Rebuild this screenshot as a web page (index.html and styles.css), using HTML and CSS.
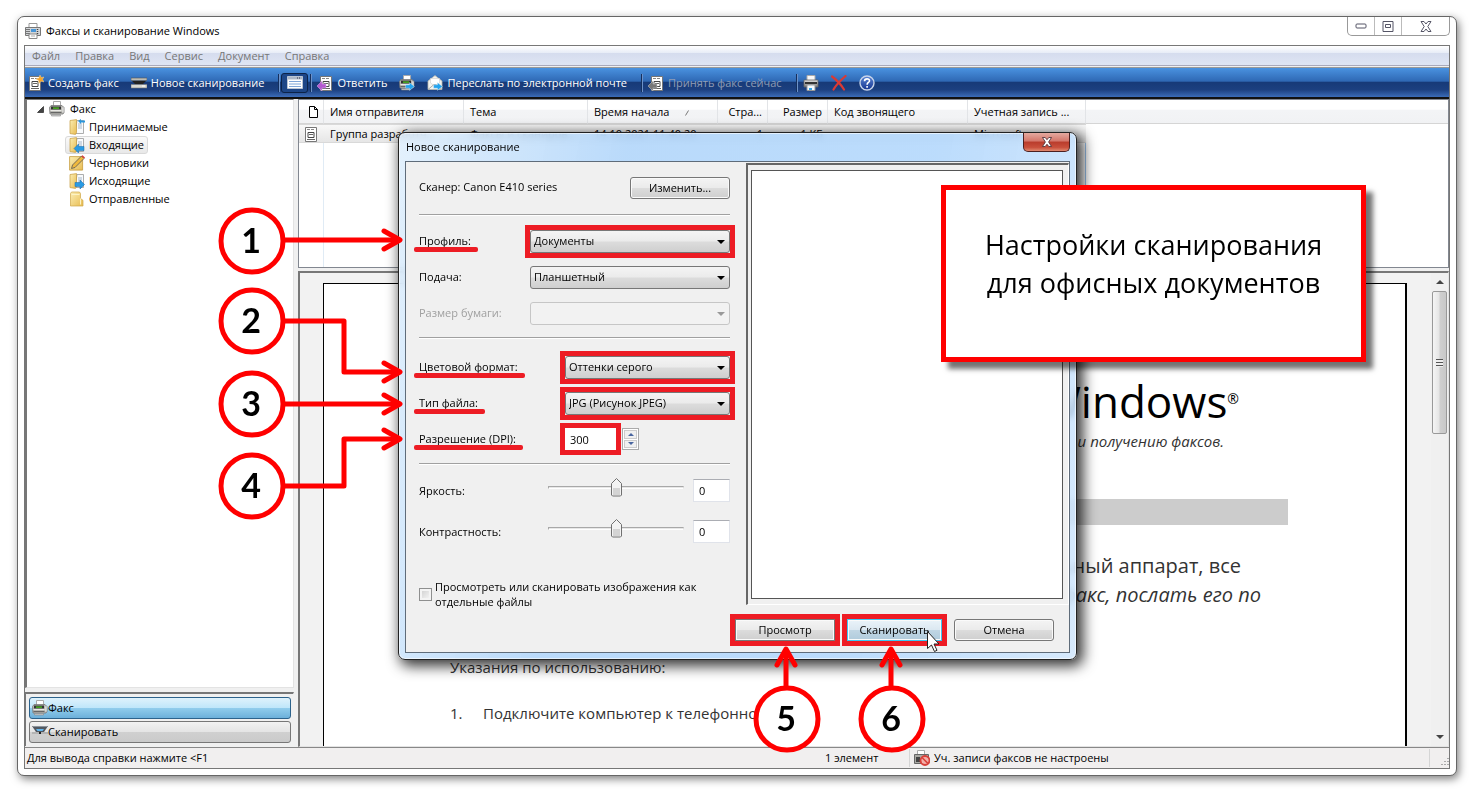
FILE: index.html
```html
<!DOCTYPE html>
<html lang="ru">
<head>
<meta charset="utf-8">
<title>Факсы и сканирование Windows</title>
<link rel="stylesheet" href="styles.css">
</head>
<body>
<svg class="defs" aria-hidden="true">
  <defs>
    <linearGradient id="gFold" x1="0" y1="0" x2="1" y2="1"><stop offset="0" stop-color="#fbeeb4"/><stop offset="1" stop-color="#e8bc52"/></linearGradient>
    <linearGradient id="gGray" x1="0" y1="0" x2="0" y2="1"><stop offset="0" stop-color="#e4e4e4"/><stop offset="1" stop-color="#777"/></linearGradient>
    <linearGradient id="gHelp" x1="0" y1="0" x2="0" y2="1"><stop offset="0" stop-color="#5b86d6"/><stop offset="1" stop-color="#16348f"/></linearGradient>
    <symbol id="fax" viewBox="0 0 16 16">
      <path d="M4.500 .5h7v5h-7z" fill="#fff" stroke="#aaa"/>
      <path d="M2 4.500h11l2 2v5l-1 1.500H1L.5 6.500z" fill="#b9b9b4" stroke="#777" stroke-width=".8"/>
      <path d="M2 5.500h10v3H2z" fill="#333"/><path d="M4 6.500h6v1.200H4z" fill="#4fd01a"/>
      <path d="M1.500 9.500h11" stroke="#e8e8e4"/><path d="M1.500 11.500h11" stroke="#666"/><path d="M2.500 13.500h9v1.500h-9z" fill="#ccc" stroke="#888" stroke-width=".6"/><path d="M14 6.500v5" stroke="#f4f4f4"/>
    </symbol>
    <symbol id="printer" viewBox="0 0 16 16">
      <path d="M4 .5h8V6H4z" fill="#f8f8f8" stroke="#aaa"/>
      <path d="M1 5h14v7H1z" fill="url(#gGray)" stroke="#666" stroke-width=".8"/>
      <path d="M2 7h12v2H2z" fill="#333"/><path d="M4 10h8v5.500H4z" fill="#f5faff" stroke="#999"/><path d="M6 13h3v2H6z" fill="#35a5e8"/>
    </symbol>
    <symbol id="appfax" viewBox="0 0 16 16">
      <path d="M4 .5h8V5H4z" fill="#fff" stroke="#999"/>
      <path d="M.5 4.500h15v8H.5z" fill="#d2d5d8" stroke="#777"/>
      <path d="M2 6v5M4 6v5" stroke="#444" stroke-dasharray="1 1" stroke-width="1.300"/>
      <path d="M6 6h5v3H6z" fill="#4796d8"/><path d="M12.500 6v5" stroke="#444" stroke-width="1.500" stroke-dasharray="1 1"/>
      <path d="M4 11h8v4.500H4z" fill="#fff" stroke="#888"/><path d="M6 13h4" stroke="#aaa"/>
    </symbol>
    <symbol id="doc" viewBox="0 0 16 16">
      <path d="M2.500 1.500h11v14h-11z" fill="#fff" stroke="#777"/>
      <path d="M4 3.500h8" stroke="#888" stroke-dasharray="3 1"/>
      <path d="M5 6.500h6v5H5z" fill="#fff" stroke="#444"/><path d="M6 8.500h4M4 13.500h8" stroke="#666"/>
    </symbol>
    <symbol id="newfax" viewBox="0 0 16 16">
      <use href="#doc" x="-1"/><path d="m12 0 1.200 2.500L16 2l-1.500 2.200L16 7l-3-.8L11 8.500l-.4-3L8 4l2.800-1z" fill="#f6a42a" stroke="#ffe0a0" stroke-width=".4"/>
    </symbol>
    <symbol id="arrow" viewBox="0 0 9 8"><path d="M.5 2.500H4V.5L8.500 4 4 7.500v-2H.5z" fill="currentColor" stroke="#fff" stroke-opacity=".5" stroke-width=".6"/></symbol>
    <symbol id="scan" viewBox="0 0 16 16">
      <path d="M0 3h16v2.500H0z" fill="#bdbdb5" stroke="#555" stroke-width=".6"/><path d="M1 6h14l-3 3H4z" fill="#222"/>
      <path d="M0 9.500h16V13H0z" fill="#d9d9d2" stroke="#777" stroke-width=".6"/><path d="M11 11h3" stroke="#fff"/>
    </symbol>
    <symbol id="scan2" viewBox="0 0 16 16">
      <path d="M0 2h16l-4 6H4z" fill="#525860"/><path d="M1 2.500h14" stroke="#8d959c"/><path d="M4 5h8l-1.500 2h-5z" fill="#63b8f0"/><path d="M0 9h16" stroke="#999"/><path d="M7 8h2v2H7z" fill="#222"/>
    </symbol>
    <symbol id="pane" viewBox="0 0 16 13"><path d="M.5.5h15v12H.5z" fill="#fff" stroke="#b8c4d4"/><path d="M1 1h14v2.500H1z" fill="#aab6c6"/><path d="M10 2h4" stroke="#334" stroke-dasharray="1 1"/><path d="M2 5.500h12M2 8h12M2 10.500h12" stroke="#7fa6d8"/></symbol>
    <symbol id="folder" viewBox="0 0 16 16"><path d="M1.500 2.500l1-1.500h8l1 1.500v5l2.500 1.800v5.700H1.500z" fill="url(#gFold)" stroke="#cfa647" stroke-width=".7"/><path d="M11.500 7.500v6M2.500 3.500h8" stroke="#fdf3c6" fill="none"/></symbol>
    <symbol id="folderdoc" viewBox="0 0 16 16"><path d="M8 1.500h6.500v13H6z" fill="#f8fafc" stroke="#999" stroke-width=".8"/><path d="M9 5h4M9 7h4M9 9h4" stroke="#a5b7cc"/><path d="M1 1.500 7.500.6v13l-1 1.800-5.500-.8z" fill="url(#gFold)" stroke="#c59b3c" stroke-width=".7"/></symbol>
  </defs>
</svg>

<main class="window">
  <header class="titlebar">
    <svg class="ico"><use href="#appfax"/></svg>
    <h1>Факсы и сканирование Windows</h1>
    <div class="winbtns">
      <button aria-label="Свернуть"><svg width="12" height="6"><rect x="1" y="1" width="10" height="4" rx="1" fill="#fff" stroke="#556"/></svg></button>
      <button aria-label="Развернуть"><svg width="12" height="11"><path d="M1 .5h10v10H1z" fill="#fff" stroke="#556"/><path d="M3.500 3.500h5v3h-5z" fill="none" stroke="#556"/></svg></button>
      <button aria-label="Закрыть" class="wide"><svg width="12" height="11" viewBox="0 0 12 11"><path d="M1 .5h3l2 2.500 2-2.500h3L7.800 5.500l3.200 5H8L6 8l-2 2.500H1l3.200-5z" fill="#fff" stroke="#556"/></svg></button>
    </div>
  </header>

  <div class="client">
    <nav class="menu">
      <a href="#">Файл</a><a href="#">Правка</a><a href="#">Вид</a><a href="#">Сервис</a><a href="#">Документ</a><a href="#">Справка</a>
    </nav>
    <div class="toolbar">
      <button><svg class="ico"><use href="#newfax"/></svg>Создать факс</button>
      <button><svg class="ico"><use href="#scan"/></svg>Новое сканирование</button>
      <i class="sep"></i>
      <button class="pressed" aria-label="Область просмотра"><svg width="16" height="13"><use href="#pane"/></svg></button>
      <i class="sep tight"></i>
      <button class="reply"><svg class="ico" viewBox="0 0 16 16"><use href="#doc" x="1"/><path d="M0 11l5-5v3h4v4H5v3z" fill="#b45bd0" stroke="#e0b0f0" stroke-width=".5"/></svg>Ответить</button>
      <button aria-label="Переслать факс"><svg class="ico" viewBox="0 0 16 16"><use href="#fax"/><use href="#arrow" x="6" y="7" width="10" height="9" color="#23a3ee"/></svg></button>
      <button><svg class="ico" viewBox="0 0 16 16"><path d="M1 6l7-5.500L15 6v8.500H1z" fill="#f5f5f0" stroke="#b9b9b0" stroke-width=".8"/><path d="M3.500 3.500h9V8L8 11 3.500 8z" fill="#fff" stroke="#ccc" stroke-width=".6"/><path d="M1 14.500l6-5h2l6 5" fill="none" stroke="#aaa"/><use href="#arrow" x="6" y="7" width="10" height="9" color="#23a3ee"/></svg>Переслать по электронной почте</button>
      <i class="sep"></i>
      <button class="receive" disabled><svg class="ico" viewBox="0 0 16 16"><use href="#doc" x="1"/><path d="M0 11l5-5v3h4v4H5v3z" fill="#777" stroke="#ccc" stroke-width=".5"/></svg>Принять факс сейчас</button>
      <i class="sep"></i>
      <button aria-label="Печать" class="print"><svg class="ico"><use href="#printer"/></svg></button>
      <button aria-label="Удалить"><svg class="ico" viewBox="0 0 16 16"><path d="M1 1.500c4 3 9 8 12 13M14.500 1C10 5 5 10 2.500 14.500" fill="none" stroke="#d93a35" stroke-width="2.200" stroke-linecap="round"/></svg></button>
      <button aria-label="Справка"><svg class="ico" viewBox="0 0 16 16"><circle cx="8" cy="8" r="7" fill="url(#gHelp)" stroke="#c8d4ea" stroke-width="1.400"/><path d="M5.500 6.200C5.500 3 10.800 3.200 10.500 6c-.2 1.500-2.400 1.600-2.400 3.700M8.100 11v1.700" fill="none" stroke="#fff" stroke-width="1.600"/></svg></button>
    </div>

    <div class="workspace">
      <aside class="side">
        <div class="tree">
          <div class="root"><svg width="7" height="7"><path d="M6.500.5v6h-6z" fill="#444" stroke="#111" stroke-width=".6"/></svg><svg class="ico"><use href="#fax"/></svg><span>Факс</span></div>
          <ul>
            <li><svg class="ico" viewBox="0 0 16 16"><use href="#folderdoc"/><path d="M9 2l3-2v1.500h4v2h-4V5z" fill="#2a96dc"/></svg><span>Принимаемые</span></li>
            <li class="on"><svg class="ico" viewBox="0 0 16 16"><use href="#folderdoc"/><path d="M5 11.500L9.500 7v2.500h5.500v4H9.500V16z" fill="#2a9be4" stroke="#1668a8" stroke-width=".5"/></svg><span>Входящие</span></li>
            <li><svg class="ico" viewBox="0 0 16 16"><path d="M.6 1.600h13v13.500H.6z" fill="url(#gFold)" stroke="#c59b3c" stroke-width=".8"/><path d="M2.500 13.500l1-3.500 9-9 2.500 2.500-9 9z" fill="#f0b93c" stroke="#555" stroke-width=".8"/><path d="M12.500 1L15 3.500l1-1L13.500.2z" fill="#d33"/></svg><span>Черновики</span></li>
            <li><svg class="ico" viewBox="0 0 16 16"><use href="#folderdoc"/><path d="M15.500 11.500L11 7v2.500H6v4h5V16z" fill="#2a9be4" stroke="#1668a8" stroke-width=".5"/></svg><span>Исходящие</span></li>
            <li><svg class="ico"><use href="#folder"/></svg><span>Отправленные</span></li>
          </ul>
        </div>
        <div class="modes">
          <button class="active"><svg class="ico"><use href="#fax"/></svg>Факс</button>
          <button><svg class="ico"><use href="#scan2"/></svg>Сканировать</button>
        </div>
      </aside>

      <section class="content">
        <div class="list">
          <table>
            <colgroup><col class="c-icon"><col class="c-wide"><col class="c-subj"><col class="c-time"><col class="c-pages"><col class="c-size"><col class="c-wide"><col class="c-acc"><col></colgroup>
            <thead><tr>
              <th><svg width="9" height="12"><path d="M.5.5h5l3 3v8h-8zM5.500.5v3h3" fill="#fff" stroke="#000"/></svg></th>
              <th>Имя отправителя</th><th>Тема</th>
              <th>Время начала<svg class="sort" width="7" height="6"><path d="M.5 5.500L3.500.5" stroke="#777" fill="none"/></svg></th>
              <th class="num">Стра...</th><th class="num">Размер</th><th>Код звонящего</th><th>Учетная запись ...</th><th></th>
            </tr></thead>
            <tbody><tr>
              <td><svg class="ico"><use href="#doc"/></svg></td><td>Группа разработч...</td><td>Факсы и сканиров...</td><td>14.10.2021 11:40:20</td><td class="num">1</td><td class="num">1 КБ</td><td></td><td>Microsoft</td><td></td>
            </tr></tbody>
          </table>
          <div class="gridlines"></div>
        </div>

        <div class="preview">
          <article class="page">
            <h2>Windows<sup>®</sup></h2>
            <p class="sub">и получению факсов.</p>
            <div class="bar"></div>
            <p class="lead">факсимильный аппарат, все</p>
            <p class="lead it">факс, послать его по</p>
            <p class="hint">Указания по использованию:</p>
            <ol><li><span>1.</span>Подключите компьютер к телефонной</li></ol>
          </article>
          <div class="scroll">
            <i class="up"></i>
            <div class="thumb"><i></i></div>
            <i class="down"></i>
          </div>
        </div>
      </section>
    </div>

    <footer class="status">
      <span class="help">Для вывода справки нажмите &lt;F1</span>
      <span class="count">1 элемент</span>
      <span class="acct"><svg class="ico" viewBox="0 0 16 16"><path d="M3.500.5h7V5h-7z" fill="#fff" stroke="#aaa"/><path d="M.5 4.500h14v9H.5z" fill="#a9a9a4" stroke="#666"/><path d="M2 7h4v5H2z" fill="#444"/><circle cx="11" cy="10.500" r="4.500" fill="#f3b0aa" stroke="#d8403a" stroke-width="1.800"/><path d="M8 7.500l6 6" stroke="#d8403a" stroke-width="1.600"/></svg>Уч. записи факсов не настроены</span>
      <span class="grip"><svg width="10" height="10"><path d="M9 1v1M6 4v1M9 4v1M3 7v1M6 7v1M9 7v1" stroke="#aaa" stroke-width="2"/></svg></span>
    </footer>
  </div>
</main>

<section class="dialog" role="dialog" aria-labelledby="dlg">
  <header><h2 id="dlg">Новое сканирование</h2>
    <button class="close" aria-label="Закрыть"><svg width="12" height="10" viewBox="0 0 12 11"><path d="M1 .5h3l2 2.500 2-2.500h3L7.800 5.500l3.200 5H8L6 8l-2 2.500H1l3.200-5z" fill="#fff" stroke="#54343a"/></svg></button>
  </header>
  <form class="panel">
    <div class="options">
      <div class="row scanner"><span>Сканер: Canon E410 series</span><button type="button" class="btn">Изменить...</button></div>
      <hr>
      <div class="row"><label for="prof" class="ul">Профиль:</label><div class="sel w200 mark"><select id="prof"><option>Документы</option></select></div></div>
      <div class="row"><label for="feed">Подача:</label><div class="sel w200"><select id="feed"><option>Планшетный</option></select></div></div>
      <div class="row off"><label for="size">Размер бумаги:</label><div class="sel w200"><select id="size" disabled><option></option></select></div></div>
      <hr>
      <div class="row"><label for="color" class="ul">Цветовой формат:</label><div class="sel w165 mark"><select id="color"><option>Оттенки серого</option></select></div></div>
      <div class="row"><label for="type" class="ul">Тип файла:</label><div class="sel w165 mark"><select id="type"><option>JPG (Рисунок JPEG)</option></select></div></div>
      <div class="row"><label for="dpi" class="ul">Разрешение (DPI):</label>
        <div class="spin"><input id="dpi" class="mark" type="text" value="300"><span class="ud"><button type="button" aria-label="Больше"></button><button type="button" aria-label="Меньше"></button></span></div></div>
      <hr>
      <div class="row tall"><label for="br">Яркость:</label><input id="br" type="range" min="-100" max="100" value="0"><input class="val" type="text" value="0" aria-label="Значение яркости"></div>
      <div class="row tall"><label for="ct">Контрастность:</label><input id="ct" type="range" min="-100" max="100" value="0"><input class="val" type="text" value="0" aria-label="Значение контрастности"></div>
      <div class="check"><input type="checkbox" id="sep"><label for="sep">Просмотреть или сканировать изображения как отдельные файлы</label></div>
    </div>
    <div class="canvas"><div></div></div>
    <div class="actions">
      <button type="button" class="btn mark">Просмотр</button>
      <button type="button" class="btn hot mark">Сканировать</button>
      <button type="button" class="btn">Отмена</button>
    </div>
  </form>
</section>

<aside class="callout">Настройки сканирования<br>для офисных документов</aside>

<svg class="notes" width="940" height="770">
  <g fill="none" stroke="#f00" stroke-width="5" stroke-linejoin="round">
    <path d="M284 240H399"/><path d="M284 321H344V372H399"/><path d="M284 404H399"/><path d="M284 486H344V439H399"/>
    <path d="M786 686V650"/><path d="M891 686V650"/>
    <g stroke-linecap="round">
      <path d="M384 231l16 9-16 9"/><path d="M384 363l16 9-16 9"/><path d="M384 395l16 9-16 9"/><path d="M384 430l16 9-16 9"/>
      <path d="M777 665l9-16 9 16"/><path d="M882 665l9-16 9 16"/>
    </g>
    <g fill="#fff">
      <circle cx="252" cy="241" r="31"/><circle cx="252" cy="321" r="31"/><circle cx="252" cy="404" r="31"/><circle cx="252" cy="486" r="31"/>
      <circle cx="787" cy="719" r="31"/><circle cx="892" cy="719" r="31"/>
    </g>
  </g>
  <g class="nums">
    <text x="251" y="253">1</text><text x="251" y="333">2</text><text x="251" y="416">3</text><text x="251" y="498">4</text>
    <text x="786" y="731">5</text><text x="891" y="731">6</text>
  </g>
  <path d="M927.500 631.500v17l4-3.500 3 6.500 2.500-1.200-3-6.300h5z" fill="#fff" stroke="#222"/>
</svg>
</body>
</html>
```

FILE: styles.css
```css
* { box-sizing: border-box; }
body {
  margin: 0;
  min-height: 100vh;
  padding: 16px 18px 20px 17px;
  display: flex;
  flex-direction: column;
  position: relative;
  background: #fff;
  color: #000;
  font: 11px/16px "Open Sans", "Noto Sans", sans-serif;
}
h1, h2, p, ul, ol { margin: 0; padding: 0; list-style: none; font-weight: 400; font-size: 11px; }
button, input, select { font: inherit; color: inherit; margin: 0; padding: 0; border: 0; background: none; }
svg { flex: none; display: block; }
.defs { position: absolute; width: 0; height: 0; }
.ico { width: 16px; height: 16px; }

.window {
  flex: 1;
  display: flex;
  flex-direction: column;
  padding: 0 6px 6px;
  border: 1px solid #666;
  border-radius: 7px;
  box-shadow: 2px 3px 8px rgba(0, 0, 0, .5);
  background: #fff;
}
.titlebar { display: flex; height: 28px; padding-left: 1px; gap: 5px; align-items: center; }
.titlebar h1 { flex: 1; }
.winbtns { display: flex; align-self: flex-start; border: 1px solid #999; border-top: 0; border-radius: 0 0 5px 5px; }
.winbtns button { width: 27px; height: 18px; display: grid; place-items: center; border-right: 1px solid #bbb; }
.winbtns .wide { width: 47px; border: 0; }

.client { flex: 1; display: flex; flex-direction: column; border: 1px solid #777; background: #f0f0f0; }
.menu {
  display: flex;
  gap: 15px;
  height: 20px;
  padding: 2px 7px;
  border-bottom: 1px solid #aab;
  background: linear-gradient(#fff, #e8edf7 35%, #d5dcee 36%, #dfe5f4);
}
.menu a { color: #777; text-decoration: none; }
.toolbar {
  display: flex;
  align-items: center;
  height: 32px;
  margin-top: 1px;
  padding-left: 3px;
  border-top: 1px solid #999;
  border-bottom: 2px solid #111;
  background: linear-gradient(#4a92e0, #2f69b5 45%, #173a78 50%, #1c4080 75%, #3b6cb8);
  color: #fff;
}
.toolbar button { display: flex; align-items: center; gap: 4px; margin-right: 12px; white-space: nowrap; }
.toolbar button:disabled { color: #8f9db5; }
.toolbar .sep { width: 2px; height: 18px; margin-left: 2px; border-left: 1px solid #14305f; border-right: 1px solid #6d92c9; }
.toolbar .tight { margin-left: 0; }
.toolbar .pressed { width: 27px; height: 20px; margin: 0 2px 0 1px; justify-content: center; border: 1px solid #0c2348; border-radius: 3px; background: #1d4687; }
.toolbar .reply, .toolbar .receive, .toolbar .print { margin-left: 5px; }

.workspace { flex: 1; display: flex; gap: 4px; }
.side { flex: none; width: 269px; display: flex; flex-direction: column; gap: 4px; }
.tree { flex: 1; padding-left: 10px; border: solid; border-width: 1px 1px 1px 2px; border-color: #777 #e3e3e3 #e3e3e3 #777; background: #fff; }
.root { display: flex; align-items: center; gap: 5px; height: 18px; }
.tree ul { padding-left: 28px; }
.tree li { display: flex; gap: 4px; align-items: center; width: max-content; height: 18px; padding: 0 3px; border: 1px solid transparent; border-radius: 3px; }
.tree .on { border-color: #d9d9d9; background: linear-gradient(#fafafa, #e8e8e8); }
.modes { display: grid; gap: 2px; padding: 3px 2px 3px 3px; border: solid; border-width: 2px 1px 0 1px; border-color: #777 #f0f0f0 #777 #777; margin-bottom: 1px; }
.modes button { display: flex; align-items: center; height: 22px; padding-left: 2px; border: 1px solid #777; border-radius: 3px; background: linear-gradient(#f2f2f2, #e4e4e4 50%, #d0d0d0 52%, #cacaca); }
.modes .active { border-color: #2c628b; background: linear-gradient(#dff2fc, #bee6fa 50%, #90ccec 52%, #6cb0da); }

.content { flex: 1; min-width: 0; display: flex; flex-direction: column; gap: 3px; }
.list { flex: none; height: 169px; display: flex; flex-direction: column; border: 1px solid #828790; background: #fff; }
table { width: 100%; table-layout: fixed; border-collapse: separate; border-spacing: 0; }
.c-icon { width: 25px; }
.c-wide { width: 140px; }
.c-subj { width: 124px; }
.c-time { width: 130px; }
.c-pages { width: 50px; }
.c-size { width: 60px; }
.c-acc { width: 118px; }
th, td { padding: 0 5px 0 6px; text-align: left; font-weight: 400; white-space: nowrap; overflow: hidden; }
th { height: 24px; border-right: 1px solid #e2e4e7; border-bottom: 1px solid #d5d5d5; background: linear-gradient(#fff 40%, #f3f4f6 45%, #f1f2f4); }
th:first-child { padding-left: 10px; }
td:first-child { padding: 0 4px; }
th:last-child { border-right: 0; }
td { height: 19px; border-top: 1px solid #d9d9d9; border-bottom: 1px solid #d9d9d9; background: linear-gradient(#f8f8f8, #e6e6e6); }
td:last-child { border: 0; background: none; }
.num { text-align: right; }
.sort { display: inline-block; margin-left: 16px; }
.gridlines { flex: 1; width: 763px; margin-left: 24px; border: solid #e0ebf5; border-width: 0 1px; border-right-color: #9cc4ee; }

.preview { flex: 1; display: flex; padding-left: 23px; border: solid; border-width: 2px 1px 1px 2px; border-color: #777 #e3e3e3 #e3e3e3 #777; background: #f2f2f2; }
.page { flex: 1; min-width: 0; margin-top: 10px; padding: 87px 117px 0 126px; border: solid #000; border-width: 1px 2px 0 1px; background: #fff; color: #333; overflow: hidden; }
.page h2 { padding-right: 49px; text-align: right; font-size: 44px; line-height: 60px; color: #000; }
.page sup { font-size: 14px; line-height: 14px; vertical-align: 14px; }
.sub { padding-right: 64px; text-align: right; font-size: 15px; line-height: 20px; font-style: italic; }
.bar { height: 26px; margin: 48px 0 26px; background: #ccc; }
.page .lead { padding-right: 47px; text-align: right; font-size: 20px; line-height: 29px; }
.page .it { padding-right: 27px; font-style: italic; }
.page .hint { margin: 48px 0 26px; font-size: 15px; line-height: 20px; }
.page li { display: flex; font-size: 15px; line-height: 20px; }
.page li span { width: 33px; }
.scroll { width: 17px; margin-left: 24px; display: flex; flex-direction: column; align-items: center; background: #f0f0f0; }
.scroll > i { height: 18px; display: grid; place-items: center; }
.scroll > i::after { content: ""; border: 4px solid transparent; border-top-width: 0; border-bottom-color: #444; }
.scroll .down { margin-top: auto; }
.scroll .down::after { border-width: 4px 4px 0; border-top-color: #444; }
.thumb { width: 15px; height: 143px; display: grid; place-items: center; border: 1px solid #999; border-radius: 2px; background: linear-gradient(90deg, #f5f5f5, #e6e6e6 45%, #cfcfcf 55%, #c8c8c8); }
.thumb i { width: 7px; height: 8px; background: repeating-linear-gradient(#555 0 1px, #eee 1px 3px); }

.status { display: flex; height: 21px; align-items: center; border-top: 1px solid #888; background: #f1efef; }
.help { flex: 1; padding-left: 2px; }
.count { width: 84px; }
.acct { width: 520px; display: flex; gap: 4px; padding: 1px 4px; border-left: 1px solid #d5d5d5; }
.grip { width: 20px; height: 18px; display: flex; align-items: flex-end; justify-content: flex-end; border-left: 1px solid #d5d5d5; }

.dialog {
  position: absolute;
  left: 398px;
  top: 132px;
  width: 679px;
  padding: 0 6px 6px;
  border: 1px solid #222;
  border-radius: 7px;
  background: linear-gradient(100deg, rgba(222, 238, 252, .85), rgba(176, 213, 250, .88) 30%, rgba(178, 215, 252, .88) 70%, rgba(208, 230, 252, .85));
  backdrop-filter: blur(3px);
  box-shadow: inset 0 0 0 1px rgba(255, 255, 255, .6), 4px 4px 14px 2px rgba(0, 0, 0, .8);
}
.dialog header { display: flex; justify-content: space-between; height: 28px; }
.dialog h2 { padding: 6px 1px; }
.close { width: 47px; height: 19px; display: grid; place-items: center; border: 1px solid #4c2020; border-top: 0; border-radius: 0 0 5px 5px; background: linear-gradient(#e5aaa0, #d4766a 45%, #b93c2c 50%, #c9503c 80%, #e08a70); }
.panel { display: grid; grid-template-columns: 340px 1fr; border: 1px solid #5f6c7a; background: #f0f0f0; }
.options { padding: 8px 16px 0 13px; }
.row { display: flex; align-items: center; justify-content: space-between; height: 36px; }
.scanner span { padding-bottom: 3px; }
.options hr { height: 2px; margin: 6px 0 10px; border: 0; border-top: 1px solid #a0a0a0; background: #fff; }
.options .scanner + hr { margin: 8px 0 7px; }
.options .row:has(.spin) + hr { margin-bottom: 5px; }
.tall { height: 41px; }
.off { color: #a0a0a0; }
.ul { position: relative; }
.ul::after { content: ""; position: absolute; left: -5px; right: -7px; bottom: -3px; height: 5px; border-radius: 2px; background: #ed1c24; }
.btn { height: 22px; width: 100px; border: 1px solid #777; border-radius: 3px; background: linear-gradient(#f4f4f4, #ebebeb 48%, #dcdcdc 52%, #cfcfcf); box-shadow: inset 0 0 0 1px #fafafa; }
.mark { outline: 5px solid #ed1c24; }
.btn.mark { border-radius: 0; }
.sel { position: relative; height: 23px; }
.sel::after { content: ""; position: absolute; right: 5px; top: 10px; border: 4px solid transparent; border-top-color: #000; border-bottom-width: 0; pointer-events: none; }
.w200 { width: 200px; }
.w165 { width: 165px; }
select { width: 100%; height: 100%; appearance: none; padding-left: 3px; border: 1px solid #777; border-radius: 3px; background: linear-gradient(#f4f4f4, #ebebeb 48%, #dcdcdc 52%, #cfcfcf); }
select:disabled { border-color: #b5b5b5; background: #f3f3f3; }
.off .sel::after { border-top-color: #999; }
.spin { display: flex; width: 165px; gap: 6px; }
.spin input { width: 51px; height: 22px; padding-left: 5px; background: #fff; }
.ud { display: grid; gap: 1px; width: 17px; height: 22px; border: 1px solid #aaa; padding: 1px; background: #fff; }
.ud button { display: grid; place-items: center; border: 1px solid #ccc; background: #f0f0f0; }
.ud button::after { content: ""; border: 3px solid transparent; border-top-width: 0; border-bottom-color: #4a66a0; }
.ud button + button::after { border-width: 3px 3px 0; border-top-color: #4a66a0; }
.tall label { flex: 1; }
input[type="range"] { appearance: none; width: 136px; height: 20px; margin: 0 9px 6px 0; }
input[type="range"]::-webkit-slider-runnable-track { height: 3px; border: 1px solid; border-color: #a8a8a8 #ddd #fff #a8a8a8; background: #e7e7e7; }
input[type="range"]::-webkit-slider-thumb {
  appearance: none;
  width: 11px;
  height: 19px;
  margin-top: -9px;
  background: url("data:image/svg+xml,%3Csvg xmlns='http://www.w3.org/2000/svg' width='11' height='19'%3E%3Cpath d='M.5 5.500L5.500.5l5 5v11.500l-1 1h-8l-1-1z' fill='%23f3f3f3' stroke='%23707070'/%3E%3Cpath d='M2 10h7v7H2z' fill='%23d4d4d4'/%3E%3C/svg%3E");
}
.val { width: 37px; height: 23px; padding-left: 5px; border: 1px solid #e0e3ea; border-top-color: #abadb3; background: #fff; }
.check { display: flex; gap: 3px; align-items: center; padding-top: 27px; line-height: 15px; }
.check input { appearance: none; flex: none; width: 13px; height: 13px; border: 1px solid #8e8f8f; background: linear-gradient(135deg, #ccc, #fafafa); box-shadow: inset 0 0 0 2px #f4f4f4; }
.check label { width: 275px; }
.canvas { padding: 5px 5px 5px 3px; margin-top: 1px; height: 442px; border: solid; border-width: 2px 1px 1px 2px; border-color: #666 #fff #fff #666; }
.canvas div { height: 100%; border: 1px solid #555; background: #fff; }
.actions { grid-column: 1 / -1; display: flex; justify-content: flex-end; gap: 12px; padding: 10px 15px 11px; }
.hot { width: 95px; border-color: #3cc6f2; background: linear-gradient(#eaf3f9, #dbe8f1 48%, #c0d6e4 52%, #b0cbdc); }

.callout {
  position: absolute;
  left: 941px;
  top: 185px;
  width: 425px;
  height: 177px;
  padding-top: 36px;
  border: 5px solid #f00;
  background: #fff;
  box-shadow: 7px 7px 5px rgba(0, 0, 0, .55);
  text-align: center;
  font-size: 27px;
  line-height: 38px;
}
.notes { position: absolute; left: 0; top: 0; pointer-events: none; }
.nums { font: 700 34px Lato, "Open Sans", sans-serif; text-anchor: middle; }
```
